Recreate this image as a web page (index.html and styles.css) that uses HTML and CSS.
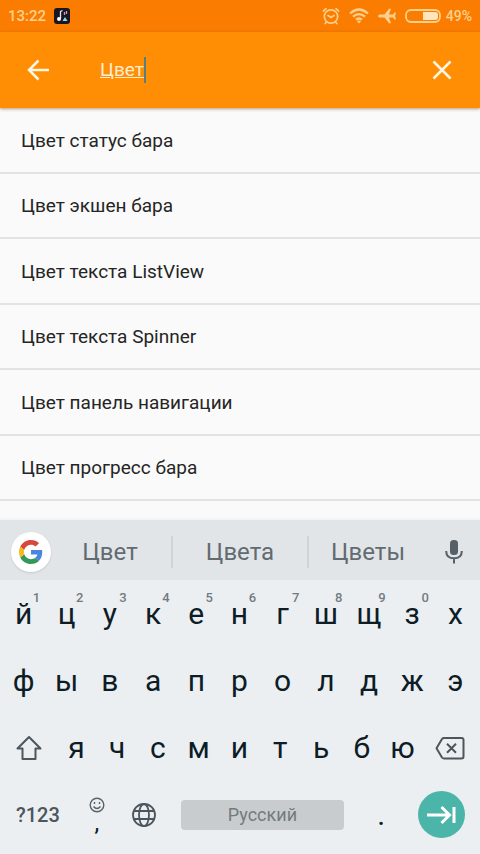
FILE: index.html
```html
<!DOCTYPE html>
<html lang="ru">
<head>
<meta charset="utf-8">
<meta name="viewport" content="width=device-width, initial-scale=1">
<title>Цвет</title>
<link rel="stylesheet" href="styles.css">
</head>
<body>
<div class="status">
  <span>13:22</span>
  <svg class="status-app" width="16" height="16" viewBox="0 0 16 16"><rect width="16" height="16" rx="3" fill="#191622"/><path d="M6.500 10.500V3.500l2-1" fill="none" stroke="#dfe3ee" stroke-width="1.300"/><circle cx="5" cy="11" r="2" fill="#fff"/><path d="M10.500 4v3M12.500 3v3" stroke="#c99ab4" stroke-width="1.300"/><path d="M8.500 13l2.500-4 2.500 4z" fill="#8edbe8"/></svg>
  <div class="status-icons">
    <svg width="18" height="18" viewBox="0 0 18 18" fill="none" stroke="currentColor" stroke-width="1.700" stroke-linecap="round"><circle cx="9" cy="9.500" r="6.700"/><path d="M1.500 4L4 1.700M16.500 4L14 1.700M4.500 15l-1.300 1.500M13.500 15l1.300 1.500M6 8.500l3 2 3-2"/></svg>
    <svg width="20" height="16" viewBox="0 0 20 16" fill="none" stroke="currentColor" stroke-width="2.300"><path d="M1 5.500Q10-2.500 19 5.500M4 8.700q6-5.200 12 0M7 11.700q3-2.500 6 0"/><path d="M8 13.300q2-1.500 4 0L10 15.500z" fill="currentColor" stroke="none"/></svg>
    <svg width="18" height="16" viewBox="0 0 18 16" fill="currentColor"><path d="M0 8q.5-1.500 2-1.500h4.500L11 .8h2l-2 5.700h4l1.500-2H18L17 8l1 3.500h-1.500l-1.500-2h-4l2 5.700h-2L6.500 9.500H2Q.5 9.500 0 8z"/></svg>
    <svg width="36" height="14" viewBox="0 0 36 14"><rect x="1" y="1" width="34" height="12" rx="5" fill="none" stroke="currentColor" stroke-width="1.800"/><path d="M18 3h12q3 0 3 3v2q0 3-3 3H18z" fill="#ffe5bd"/></svg>
    <span class="battery">49%</span>
  </div>
</div>
<header class="appbar">
  <button class="icon-button" aria-label="Назад"><svg width="24" height="24" viewBox="0 0 24 24" fill="none" stroke="currentColor" stroke-width="2.500"><path d="M23 12H3M12.500 2.500L3 12l9.500 9.500"/></svg></button>
  <div class="search">
    <input class="search-input" type="text" value="Цвет" size="4" aria-label="Поиск">
    <span class="caret"></span>
  </div>
  <button class="icon-button" aria-label="Очистить"><svg width="24" height="24" viewBox="0 0 24 24" fill="none" stroke="currentColor" stroke-width="2.500"><path d="M3.500 3.500l17 17M20.500 3.500l-17 17"/></svg></button>
</header>
<main class="results">
  <a class="result" href="#">Цвет статус бара</a>
  <a class="result" href="#">Цвет экшен бара</a>
  <a class="result" href="#">Цвет текста ListView</a>
  <a class="result" href="#">Цвет текста Spinner</a>
  <a class="result" href="#">Цвет панель навигации</a>
  <a class="result" href="#">Цвет прогресс бара</a>
</main>
<section class="keyboard">
  <div class="suggestions">
    <button class="google" aria-label="Google"><svg width="24" height="24" viewBox="0 0 48 48"><path fill="#4a86e0" d="M46.500 24.500c0-1.600-.15-3.200-.4-4.500H24v9h12.700c-.6 3-2.300 5.500-4.800 7.100l7.700 6c4.500-4.200 6.900-10.300 6.900-17.600z"/><path fill="#34985a" d="M24 48c6.500 0 11.900-2.100 15.900-5.800l-7.700-6c-2.200 1.450-4.900 2.300-8.200 2.300-6.300 0-11.600-4.200-13.500-9.900l-8 6.200C6.500 42.600 14.600 48 24 48z"/><path fill="#f3bb1b" d="M10.500 28.600c-.5-1.450-.75-3-.75-4.600s.27-3.150.75-4.600l-8-6.200C.9 16.500 0 20.100 0 24s.9 7.500 2.500 10.800z"/><path fill="#d9473c" d="M24 9.500c3.500 0 6.700 1.200 9.200 3.600l6.850-6.850C35.900 2.400 30.500 0 24 0 14.600 0 6.500 5.400 2.500 13.200l8 6.200C12.400 13.700 17.700 9.500 24 9.500z"/></svg></button>
    <button class="suggestion">Цвет</button>
    <button class="suggestion divided">Цвета</button>
    <button class="suggestion divided">Цветы</button>
    <button class="mic" aria-label="Голосовой ввод"><svg width="18" height="24" viewBox="0 0 18 24"><rect x="5" y="0" width="8" height="15" rx="3.500" fill="currentColor"/><path d="M1.200 11c0 5 3.300 7.300 7.800 7.300s7.800-2.300 7.800-7.300M9 18v5.500" fill="none" stroke="currentColor" stroke-width="2"/></svg></button>
  </div>
  <div class="keys">
    <div class="row letters">
      <button class="key">й<sup class="hint">1</sup></button>
      <button class="key">ц<sup class="hint">2</sup></button>
      <button class="key">у<sup class="hint">3</sup></button>
      <button class="key">к<sup class="hint">4</sup></button>
      <button class="key">е<sup class="hint">5</sup></button>
      <button class="key">н<sup class="hint">6</sup></button>
      <button class="key">г<sup class="hint">7</sup></button>
      <button class="key">ш<sup class="hint">8</sup></button>
      <button class="key">щ<sup class="hint">9</sup></button>
      <button class="key">з<sup class="hint">0</sup></button>
      <button class="key">х</button>
    </div>
    <div class="row letters">
      <button class="key">ф</button>
      <button class="key">ы</button>
      <button class="key">в</button>
      <button class="key">а</button>
      <button class="key">п</button>
      <button class="key">р</button>
      <button class="key">о</button>
      <button class="key">л</button>
      <button class="key">д</button>
      <button class="key">ж</button>
      <button class="key">э</button>
    </div>
    <div class="row shifted">
      <button class="key tool" aria-label="Регистр"><svg width="26" height="26" viewBox="0 0 26 26" fill="none" stroke="currentColor" stroke-width="2" stroke-linejoin="round"><path d="M13 2L24.500 13.500H19.500V24H6.500V13.500H1.500z"/></svg></button>
      <button class="key">я</button>
      <button class="key">ч</button>
      <button class="key">с</button>
      <button class="key">м</button>
      <button class="key">и</button>
      <button class="key">т</button>
      <button class="key">ь</button>
      <button class="key">б</button>
      <button class="key">ю</button>
      <button class="key tool" aria-label="Удалить"><svg width="30" height="24" viewBox="0 0 30 24" fill="none" stroke="currentColor" stroke-width="2" stroke-linejoin="round"><path d="M9 2H26.500Q28.500 2 28.500 4V20.500Q28.500 22.500 26.500 22.500H9Q7.800 22.500 7 21.500L1.500 12.200 7 3Q7.800 2 9 2zM12 7.800l9 9M21 7.800l-9 9"/></svg></button>
    </div>
    <div class="row bottom">
      <button class="key symbols">?123</button>
      <button class="key comma"><svg width="16" height="16" viewBox="0 0 16 16" fill="none" stroke="#59636a" stroke-width="1.400"><circle cx="8" cy="8" r="6.800"/><path d="M4.500 9.500q3.500 4 7 0M5.500 5v2M10.500 5v2"/></svg><span class="comma-mark">,</span></button>
      <button class="key tool" aria-label="Язык"><svg width="24" height="24" viewBox="0 0 24 24" fill="none" stroke="currentColor" stroke-width="1.800"><circle cx="12" cy="12" r="11"/><ellipse cx="12" cy="12" rx="5" ry="11"/><path d="M2 8h20M2 16h20"/></svg></button>
      <button class="space">Русский</button>
      <button class="key">.</button>
      <button class="enter" aria-label="Далее"><svg width="30" height="20" viewBox="0 0 30 20" fill="none" stroke="#fff" stroke-width="3"><path d="M1 10h22M15.500 2l8 8-8 8M28 2v16"/></svg></button>
    </div>
  </div>
</section>
</body>
</html>
```
FILE: styles.css
```css
* {
  box-sizing: border-box;
}

body {
  margin: 0;
  min-height: 100vh;
  display: flex;
  flex-direction: column;
  background: #fafafa;
  color: #252525;
  font-family: Roboto, "Noto Sans", sans-serif;
}

button {
  display: flex;
  align-items: center;
  justify-content: center;
  margin: 0;
  padding: 0;
  border: 0;
  background: none;
  color: inherit;
  font: inherit;
}

svg {
  display: block;
}

.status {
  display: flex;
  align-items: center;
  height: 32px;
  padding: 0 8px;
  background: #fa7d02;
  color: #ffd08c;
  font-size: 15px;
  font-weight: 500;
}

.status-app {
  margin-left: 8px;
}

.status-icons {
  display: flex;
  align-items: center;
  gap: 9px;
  margin-left: auto;
}

.battery {
  margin-left: -4px;
  font-size: 14px;
}

.appbar {
  display: flex;
  align-items: center;
  height: 76px;
  padding: 0 26px;
  background: #ff8e05;
  box-shadow: 0 1px 3px rgba(120, 60, 0, 0.5);
  color: #fff6e4;
  z-index: 1;
}

.search {
  display: flex;
  align-items: center;
  flex: 1;
  margin-left: 50px;
}

.search-input {
  field-sizing: content;
  padding: 0;
  border: 0;
  outline: 0;
  background: none;
  color: #ffedcf;
  font: 19px/26px Roboto, "Noto Sans", sans-serif;
  text-decoration: underline;
}

.caret {
  width: 2px;
  height: 26px;
  background: #557f82;
}

.results {
  flex: 1;
  display: grid;
  grid-auto-rows: 1fr;
  padding-bottom: 19px;
}

.result {
  display: flex;
  align-items: center;
  padding: 2px 21px 0;
  border-bottom: 2px solid #e3e3e3;
  color: inherit;
  font-size: 19px;
  line-height: 24px;
  text-decoration: none;
}

.keyboard {
  background: #ebeff2;
  box-shadow: 0 -1px 3px #edf3f5;
}

.suggestions {
  display: grid;
  grid-template-columns: 49px 122fr 136fr 120fr 53px;
  align-items: center;
  height: 60px;
  padding-top: 3px;
  background: #e1e5e8;
  color: #616b71;
}

.google {
  width: 40px;
  height: 40px;
  margin-left: 11px;
  border-radius: 50%;
  background: #fff;
  box-shadow: 0 1px 2px #c4c8cc;
}

.suggestion {
  height: 32px;
  font-size: 24px;
}

.divided {
  border-left: 2px solid #d0d4d7;
}

.mic {
  color: #566167;
}

.keys {
  padding: 0 3px 6px 2px;
}

.row {
  display: grid;
  height: 67px;
}

.letters {
  grid-template-columns: repeat(11, 1fr);
}

.shifted {
  grid-template-columns: 54px repeat(9, 1fr) 54px;
}

.bottom {
  grid-template-columns: 72fr 46fr 48fr 190fr 48fr 72fr;
  align-items: center;
}

.key {
  position: relative;
  color: #0d1c25;
  font-size: 30px;
  line-height: 36px;
}

.hint {
  position: absolute;
  top: 12px;
  right: 5px;
  color: #737b80;
  font-size: 13px;
  font-weight: 500;
  line-height: 12px;
}

.tool {
  color: #4c565c;
}

.symbols {
  color: #4c565c;
  font-size: 20px;
  font-weight: 500;
}

.comma {
  flex-direction: column;
}

.comma-mark {
  font-size: 24px;
  line-height: 20px;
}

.space {
  height: 30px;
  margin: 0 13px;
  border-radius: 4px;
  background: #c8ccce;
  color: #747a7d;
  font-size: 18px;
}

.enter {
  justify-self: center;
  width: 47px;
  height: 47px;
  border-radius: 50%;
  background: #4cb5aa;
}
```
